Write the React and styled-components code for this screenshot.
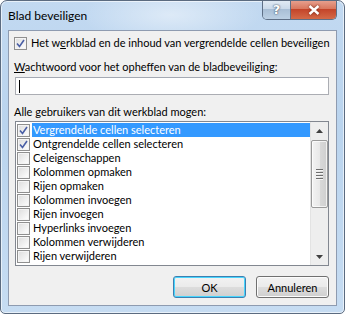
import styled, { createGlobalStyle } from "styled-components";

const GlobalStyle = createGlobalStyle`
  html, body {
    margin: 0;
    padding: 0;
    background: #ffffff;
  }
  body {
    font-family: Lato, "Liberation Sans", sans-serif;
    font-size: 11px;
    white-space: nowrap;
  }
`;

const permissions = [
  { label: "Vergrendelde cellen selecteren", checked: true, selected: true },
  { label: "Ontgrendelde cellen selecteren", checked: true },
  { label: "Celeigenschappen" },
  { label: "Kolommen opmaken" },
  { label: "Rijen opmaken" },
  { label: "Kolommen invoegen" },
  { label: "Rijen invoegen" },
  { label: "Hyperlinks invoegen" },
  { label: "Kolommen verwijderen" },
  { label: "Rijen verwijderen" },
];

const Check = ({ checked }) => (
  <Box>
    {checked && (
      <svg width="9" height="9" viewBox="0 0 9 9">
        <path d="M1 4.5 L3.5 7.5 L8 1" fill="none" stroke="#4a5fa6" strokeWidth="1.6" />
      </svg>
    )}
  </Box>
);

const App = () => {
  return (
    <>
      <GlobalStyle />
      <Frame>
        <TitleBar>
          <Title>Blad beveiligen</Title>
          <Caption>
            <HelpBtn>?</HelpBtn>
            <CloseBtn>
              <svg width="12" height="10" viewBox="0 0 12 10">
                <path d="M1.5 1 L10.5 9 M10.5 1 L1.5 9" stroke="#ffffff" strokeWidth="2.4" />
              </svg>
            </CloseBtn>
          </Caption>
        </TitleBar>
        <Client>
          <CheckRow>
            <Check checked />
            <span>Het w<u>e</u>rkblad en de inhoud van vergrendelde cellen beveiligen</span>
          </CheckRow>
          <Label $top={9}><u>W</u>achtwoord voor het opheffen van de bladbeveiliging:</Label>
          <Input>
            <Caret />
          </Input>
          <Label $top={9}>Alle <u>g</u>ebruikers van dit werkblad mogen:</Label>
          <ListBox>
            <Items>
              {permissions.map((p) => (
                <Item key={p.label}>
                  <Check checked={p.checked} />
                  <ItemText $selected={p.selected}>{p.label}</ItemText>
                </Item>
              ))}
            </Items>
            <ScrollBar>
              <Arrow>
                <svg width="7" height="4" viewBox="0 0 7 4">
                  <path d="M0 4 L3.5 0 L7 4 Z" fill="#404040" />
                </svg>
              </Arrow>
              <Track>
                <Thumb>
                  <Grip />
                  <Grip />
                  <Grip />
                  <Grip />
                </Thumb>
              </Track>
              <Arrow>
                <svg width="7" height="4" viewBox="0 0 7 4">
                  <path d="M0 0 L7 0 L3.5 4 Z" fill="#404040" />
                </svg>
              </Arrow>
            </ScrollBar>
          </ListBox>
          <Buttons>
            <Button $default>OK</Button>
            <Button>Annuleren</Button>
          </Buttons>
        </Client>
      </Frame>
    </>
  );
};

const Frame = styled.div`
  width: 345px;
  height: 314px;
  box-sizing: border-box;
  border: 1px solid #5b6b80;
  border-radius: 7px 7px 5px 5px;
  background:
    radial-gradient(ellipse 90px 30px at 170px 14px, rgba(255, 255, 255, 0.45), transparent),
    linear-gradient(180deg, #c2d9f1 0%, #bad4ee 40%, #c6dcf2 100%);
  box-shadow: inset 0 0 0 1px rgba(255, 255, 255, 0.6);
  display: flex;
  flex-direction: column;
  overflow: hidden;
`;

const TitleBar = styled.div`
  height: 29px;
  flex: none;
  display: flex;
  justify-content: space-between;
  align-items: flex-start;
  padding: 0 7px 0 7px;
`;

const Title = styled.div`
  padding-top: 7px;
  font-size: 12px;
  color: #000000;
`;

const Caption = styled.div`
  display: flex;
  margin-top: -1px;
  border: 1px solid #5e6f86;
  border-top: none;
  border-radius: 0 0 5px 5px;
  overflow: hidden;
  height: 19px;
`;

const HelpBtn = styled.div`
  width: 27px;
  display: flex;
  align-items: center;
  justify-content: center;
  font-family: "DejaVu Sans", sans-serif;
  font-weight: bold;
  font-size: 13px;
  color: #ffffff;
  text-shadow: 0 0 2px #44546a, 0 0 1px #44546a;
  background: linear-gradient(180deg, #e3ecf5 0%, #cbdaea 45%, #a9bfd6 50%, #bcd0e4 100%);
  border-right: 1px solid #5e6f86;
`;

const CloseBtn = styled.div`
  width: 45px;
  display: flex;
  align-items: center;
  justify-content: center;
  background: linear-gradient(180deg, #e8a493 0%, #d9785f 45%, #c4452a 50%, #d46a48 100%);
  svg {
    filter: drop-shadow(0 0 1px #6a1d0e);
  }
`;

const Client = styled.div`
  flex: 1;
  margin: 0 7px 7px 7px;
  background: #f0f0f0;
  border: 1px solid #8e9bb0;
  display: flex;
  flex-direction: column;
  padding: 5px 7px 0 5px;
  color: #000000;
`;

const CheckRow = styled.div`
  display: flex;
  align-items: center;
  gap: 4px;
  height: 14px;
  line-height: 14px;
`;

const Box = styled.div`
  width: 13px;
  height: 13px;
  box-sizing: border-box;
  flex: none;
  border: 1px solid #8f8f8f;
  background: linear-gradient(135deg, #dcdcdc 0%, #f5f5f5 70%, #ffffff 100%);
  box-shadow: inset 0 0 0 1px #f4f4f4;
  display: flex;
  align-items: center;
  justify-content: center;
`;

const Label = styled.div`
  margin-top: ${(p) => p.$top}px;
  height: 16px;
  line-height: 16px;
`;

const Input = styled.div`
  margin-top: 2px;
  margin-left: 1px;
  height: 18px;
  box-sizing: border-box;
  border: 1px solid #abadb3;
  border-top-color: #a4a9b3;
  background: #ffffff;
  display: flex;
  align-items: center;
  padding-left: 3px;
`;

const Caret = styled.div`
  width: 1px;
  height: 13px;
  background: #000000;
`;

const ListBox = styled.div`
  margin-top: 1px;
  margin-left: 1px;
  height: 145px;
  box-sizing: border-box;
  border: 1px solid #828790;
  background: #ffffff;
  display: flex;
`;

const Items = styled.div`
  flex: 1;
  padding-top: 1px;
  display: flex;
  flex-direction: column;
`;

const Item = styled.div`
  height: 14px;
  display: flex;
  align-items: center;
  padding-left: 1px;
  gap: 2px;
`;

const ItemText = styled.div`
  flex: 1;
  height: 14px;
  line-height: 14px;
  padding-left: 1px;
  background: ${(p) => (p.$selected ? "#3399ff" : "transparent")};
  color: ${(p) => (p.$selected ? "#ffffff" : "#000000")};
`;

const ScrollBar = styled.div`
  width: 17px;
  display: flex;
  flex-direction: column;
  background: #eeeeee;
  border-left: 1px solid #e3e3e3;
`;

const Arrow = styled.div`
  height: 17px;
  display: flex;
  align-items: center;
  justify-content: center;
  flex: none;
`;

const Track = styled.div`
  flex: 1;
  display: flex;
  flex-direction: column;
`;

const Thumb = styled.div`
  height: 68px;
  margin: 1px 0 0 0;
  box-sizing: border-box;
  border: 1px solid #9a9a9a;
  border-radius: 2px;
  background: linear-gradient(90deg, #f3f3f3 0%, #e8e8e8 50%, #d9d9d9 51%, #cfcfcf 100%);
  box-shadow: inset 0 0 0 1px rgba(255, 255, 255, 0.7);
  display: flex;
  flex-direction: column;
  justify-content: center;
  align-items: center;
  gap: 1px;
`;

const Grip = styled.div`
  width: 7px;
  height: 1px;
  background: #6e6e6e;
  border-bottom: 1px solid #f5f5f5;
`;

const Buttons = styled.div`
  margin-top: 10px;
  display: flex;
  justify-content: flex-end;
  gap: 10px;
`;

const Button = styled.div`
  width: 73px;
  height: 22px;
  box-sizing: border-box;
  border: 1px solid ${(p) => (p.$default ? "#3c7fb1" : "#707070")};
  border-radius: 3px;
  background: linear-gradient(180deg, #f2f2f2 0%, #ebebeb 48%, #dddddd 50%, #cfcfcf 100%);
  box-shadow: inset 0 0 0 1px ${(p) => (p.$default ? "#48d5fd" : "#fcfcfc")};
  display: flex;
  align-items: center;
  justify-content: center;
`;

export default App;
